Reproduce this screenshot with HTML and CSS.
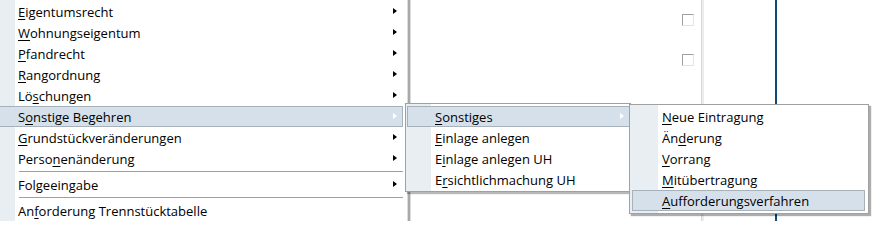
FILE: index.html
```html
<!DOCTYPE html>
<html>
<head>
<meta charset="utf-8">
<link rel="stylesheet" href="styles.css">
</head>
<body>
<div class="page">
  <div class="pane-left"></div>
  <div class="pane-mid">
    <span class="cb"></span>
    <span class="cb"></span>
  </div>
  <div class="divider"></div>
  <div class="pane-right"></div>
  <div class="blue-line"></div>
  <div class="pane-end"></div>
</div>

<div class="menu m1">
  <div class="item sub"><span><u>E</u>igentumsrecht</span><i class="arrow"></i></div>
  <div class="item sub"><span><u>W</u>ohnungseigentum</span><i class="arrow"></i></div>
  <div class="item sub"><span><u>P</u>fandrecht</span><i class="arrow"></i></div>
  <div class="item sub"><span><u>R</u>angordnung</span><i class="arrow"></i></div>
  <div class="item sub"><span>Lö<u>s</u>chungen</span><i class="arrow"></i></div>
  <div class="item sub active"><span>S<u>o</u>nstige Begehren</span><i class="arrow"></i></div>
  <div class="item sub"><span><u>G</u>rundstückveränderungen</span><i class="arrow"></i></div>
  <div class="item sub"><span>Perso<u>n</u>enänderung</span><i class="arrow"></i></div>
  <div class="sep"></div>
  <div class="item sub"><span>Folgeeingabe</span><i class="arrow"></i></div>
  <div class="sep"></div>
  <div class="item"><span>An<u>f</u>orderung Trennstücktabelle</span></div>
</div>

<div class="menu m2">
  <div class="item sub active"><span><u>S</u>onstiges</span><i class="arrow"></i></div>
  <div class="item"><span><u>E</u>inlage anlegen</span></div>
  <div class="item"><span>E<u>i</u>nlage anlegen UH</span></div>
  <div class="item"><span>E<u>r</u>sichtlichmachung UH</span></div>
</div>

<div class="menu m3">
  <div class="item"><span><u>N</u>eue Eintragung</span></div>
  <div class="item"><span>Än<u>d</u>erung</span></div>
  <div class="item"><span><u>V</u>orrang</span></div>
  <div class="item"><span><u>M</u>itübertragung</span></div>
  <div class="item active"><span><u>A</u>ufforderungsverfahren</span></div>
</div>
</body>
</html>
```

FILE: styles.css
```css
html, body {
  margin: 0;
  padding: 0;
  background: #fff;
}
body {
  width: 881px;
  height: 221px;
  overflow: hidden;
  position: relative;
  font-family: "Open Sans", "Noto Sans", sans-serif;
}

/* background page */
.page {
  display: flex;
  height: 221px;
}
.pane-left {
  width: 411px;
  flex: none;
}
.pane-mid {
  width: 290px;
  flex: none;
  display: flex;
  flex-direction: column;
  align-items: flex-end;
  padding: 14px 7px 0 0;
  box-sizing: border-box;
  gap: 28px;
}
.cb {
  display: block;
  width: 12px;
  height: 12px;
  box-sizing: border-box;
  border-top: 1px solid #a0a0a0;
  border-left: 1px solid #a0a0a0;
  border-right: 1px solid #e3e3e3;
  border-bottom: 1px solid #e3e3e3;
  background: #fff;
}
.divider {
  width: 3px;
  flex: none;
  background: linear-gradient(to right, #d9d9d9 0, #d9d9d9 1px, #ececec 1px);
}
.pane-right {
  width: 71px;
  flex: none;
}
.blue-line {
  width: 2px;
  flex: none;
  background: #0e4a79;
}
.pane-end {
  flex: 1;
}

/* menus */
.menu {
  position: absolute;
  box-sizing: border-box;
  font-size: 13px;
  color: #000;
}
.item {
  position: relative;
  height: 21px;
  line-height: 20px;
  box-sizing: border-box;
  white-space: nowrap;
  border: 1px solid transparent;
}
.item u {
  text-decoration: underline;
  text-underline-offset: 2px;
}
.item.active {
  background: #d5e0ea;
  border-color: #a7b1ba;
}
.arrow {
  position: absolute;
  top: 6px;
  width: 0;
  height: 0;
  border-left: 4px solid #000;
  border-top: 3.5px solid transparent;
  border-bottom: 3.5px solid transparent;
}
.item.active .arrow {
  border-left-color: #fff;
}

.m1 {
  left: 0;
  top: 0;
  width: 407px;
  height: 221px;
  padding: 1px 4px 0 0;
  background: linear-gradient(to right, #e9eef2 0, #e9eef2 15px, #fff 15px);
  box-shadow: 1px 0 0 #dcdcdc, 2px 0 0 #a9a9a9, 3px 0 0 #a9a9a9, 4px 0 0 #dcdcdc;
}
.m1 .item {
  padding-left: 18px;
  border-left: none;
}
.m1 .arrow {
  right: 5px;
}
.m1 .sep {
  height: 5px;
  box-sizing: border-box;
  padding-top: 2px;
  margin-left: 19px;
}
.m1 .sep::before {
  content: "";
  display: block;
  height: 1px;
  background: #a0a0a0;
}

.m2 {
  left: 405px;
  top: 103px;
  width: 226px;
  height: 89px;
  padding: 2px 0 1px 1px;
  border: 1px solid #a0a0a0;
  background: linear-gradient(to right, #e9eef2 0, #e9eef2 25px, #fff 25px);
  box-shadow: 2px 2px 1px rgba(0, 0, 0, 0.28);
}
.m2 .item {
  padding-left: 27px;
}
.m2 .arrow {
  right: 5px;
}

.m3 {
  left: 629px;
  top: 104px;
  width: 240px;
  height: 110px;
  padding: 1px 3px 2px 2px;
  border: 1px solid #a0a0a0;
  background: linear-gradient(to right, #e9eef2 0, #e9eef2 28px, #fff 28px);
  box-shadow: 2px 2px 1px rgba(0, 0, 0, 0.32);
}
.m3 .item {
  padding-left: 29px;
}
```
